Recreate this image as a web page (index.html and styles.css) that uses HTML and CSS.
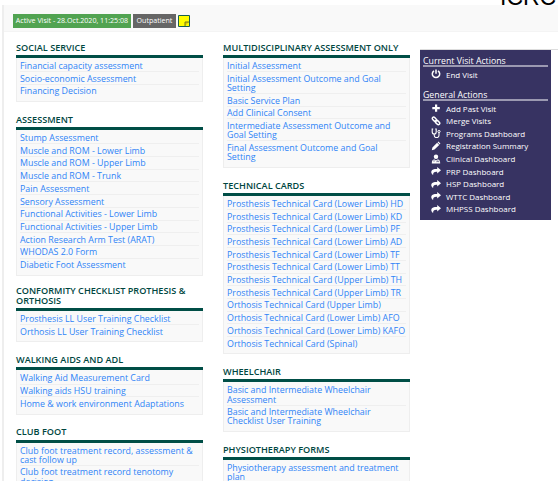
FILE: index.html
```html
<!DOCTYPE html>
<html lang="en">
<head>
<meta charset="utf-8">
<title>Patient visit</title>
<link rel="stylesheet" href="styles.css">
</head>
<body>
<header class="brand"><span>ICRC</span></header>
<div class="page">
  <div class="visit-bar">
    <span class="tag tag-active">Active Visit - 28.Oct.2020, 11:25:08</span>
    <span class="tag tag-type">Outpatient</span>
    <svg class="note" viewBox="0 0 12 12"><path d="M.5.5h11v11H.5z" fill="#ff0" stroke="#17604f"/><path d="M7 11V7h4" fill="#d8d000" stroke="#777a20"/></svg>
  </div>
  <main class="content">
    <div class="column">
      <section><h3>SOCIAL SERVICE</h3><ul>
        <li>Financial capacity assessment</li><li>Socio-economic Assessment</li><li>Financing Decision</li></ul></section>
      <section><h3>ASSESSMENT</h3><ul>
        <li>Stump Assessment</li><li>Muscle and ROM - Lower Limb</li><li>Muscle and ROM - Upper Limb</li><li>Muscle and ROM - Trunk</li><li>Pain Assessment</li><li>Sensory Assessment</li><li>Functional Activities - Lower Limb</li><li>Functional Activities - Upper Limb</li><li>Action Research Arm Test (ARAT)</li><li>WHODAS 2.0 Form</li><li>Diabetic Foot Assessment</li></ul></section>
      <section><h3 class="two-line">CONFORMITY CHECKLIST PROTHESIS &amp;<br>ORTHOSIS</h3><ul>
        <li>Prosthesis LL User Training Checklist</li><li>Orthosis LL User Training Checklist</li></ul></section>
      <section><h3>WALKING AIDS AND ADL</h3><ul>
        <li>Walking Aid Measurement Card</li><li>Walking aids HSU training</li><li>Home &amp; work environment Adaptations</li></ul></section>
      <section><h3>CLUB FOOT</h3><ul>
        <li>Club foot treatment record, assessment &amp;<br>cast follow up</li><li>Club foot treatment record tenotomy<br>decision</li></ul></section>
    </div>
    <div class="column">
      <section><h3>MULTIDISCIPLINARY ASSESSMENT ONLY</h3><ul>
        <li>Initial Assessment</li><li>Initial Assessment Outcome and Goal<br>Setting</li><li>Basic Service Plan</li><li>Add Clinical Consent</li><li>Intermediate Assessment Outcome and<br>Goal Setting</li><li>Final Assessment Outcome and Goal<br>Setting</li></ul></section>
      <section><h3>TECHNICAL CARDS</h3><ul>
        <li>Prosthesis Technical Card (Lower Limb) HD</li><li>Prosthesis Technical Card (Lower Limb) KD</li><li>Prosthesis Technical Card (Lower Limb) PF</li><li>Prosthesis Technical Card (Lower Limb) AD</li><li>Prosthesis Technical Card (Lower Limb) TF</li><li>Prosthesis Technical Card (Lower Limb) TT</li><li>Prosthesis Technical Card (Upper Limb) TH</li><li>Prosthesis Technical Card (Upper Limb) TR</li><li>Orthosis Technical Card (Upper Limb)</li><li>Orthosis Technical Card (Lower Limb) AFO</li><li>Orthosis Technical Card (Lower Limb) KAFO</li><li>Orthosis Technical Card (Spinal)</li></ul></section>
      <section><h3>WHEELCHAIR</h3><ul>
        <li>Basic and Intermediate Wheelchair<br>Assessment</li><li>Basic and Intermediate Wheelchair<br>Checklist User Training</li></ul></section>
      <section><h3>PHYSIOTHERAPY FORMS</h3><ul>
        <li>Physiotherapy assessment and treatment<br>plan</li></ul></section>
    </div>
    <aside class="side">
      <nav class="actions">
        <h4>Current Visit Actions</h4>
        <ul>
          <li><svg viewBox="0 0 10 10"><path d="M3 1.8a3.7 3.7 0 1 0 4 0M5 .5v4.2" fill="none" stroke="#fff" stroke-width="1.5"/></svg>End Visit</li>
        </ul>
        <h4>General Actions</h4>
        <ul>
          <li><svg viewBox="0 0 10 10"><path d="M4 1.500h2.200V4h2.600v2.200H6.200v2.600H4V6.200H1.300V4H4z" fill="#fff"/></svg>Add Past Visit</li>
          <li><svg viewBox="0 0 10 10"><g fill="none" stroke="#fff" stroke-width="1.500"><rect x="1" y="1.800" width="4.800" height="2.800" rx="1.400" transform="rotate(45 3.400 3.200)"/><rect x="4.200" y="5.200" width="4.800" height="2.800" rx="1.400" transform="rotate(45 6.600 6.600)"/></g></svg>Merge Visits</li>
          <li><svg viewBox="0 0 10 10"><path d="M2.200 1H1.200v3a2 2 0 0 0 4 0V1h-1M3.200 6v1.200a2.400 2.400 0 0 0 4.800 0V4.500" fill="none" stroke="#fff" stroke-width="1.100"/><circle cx="8" cy="3.500" r="1.100" fill="none" stroke="#fff"/></svg>Programs Dashboard</li>
          <li><svg viewBox="0 0 10 10"><path d="M.8 9.200l.6-2.700 4.700-4.700 2.100 2.100-4.700 4.700zM6.600 1.300l.8-.7 2 2-.7.800z" fill="#fff"/></svg>Registration Summary</li>
          <li><svg viewBox="0 0 10 10"><circle cx="5" cy="2.700" r="2.200" fill="#fff"/><path d="M.8 9.500C.8 7 1.600 5.500 3.200 5.200L5 6.500l1.800-1.300C8.400 5.500 9.200 7 9.200 9.500z" fill="#fff"/><path d="M3 5.500v2.300M6.800 5.500v1.200M5.800 8.200v-.8h2v.8" fill="none" stroke="#373362" stroke-width=".6"/></svg>Clinical Dashboard</li>
          <li><svg viewBox="0 0 10 10"><path id="share" d="M6.200 1L10 4.300 6.200 7.600V5.700C3.400 5.500 2 6.200 2.100 9 .6 8 .1 6.800.3 5.500.7 3.300 2.800 2.900 6.200 2.900z" fill="#fff"/></svg>PRP Dashboard</li>
          <li><svg viewBox="0 0 10 10"><use href="#share"/></svg>HSP Dashboard</li>
          <li><svg viewBox="0 0 10 10"><use href="#share"/></svg>WTTC Dashboard</li>
          <li><svg viewBox="0 0 10 10"><use href="#share"/></svg>MHPSS Dashboard</li>
        </ul>
      </nav>
    </aside>
  </main>
</div>
</body>
</html>
```
FILE: styles.css
```css
* { box-sizing: border-box; }
body {
  margin: 0;
  width: 558px;
  height: 487px;
  overflow: hidden;
  background: #fff;
  font-family: "Open Sans", sans-serif;
  font-size: 8.86px;
  line-height: 9.2px;
}
h3, h4, ul { margin: 0; padding: 0; }
ul { list-style: none; }
.brand {
  height: 5px;
  padding-left: 500px;
  overflow: hidden;
  font: 23px/23px "Liberation Sans", sans-serif;
  color: #000;
}
.brand span { display: block; margin-top: -14px; white-space: nowrap; }
.page {
  height: 476px;
  margin-left: 2px;
  overflow: hidden;
  border-left: 2px solid #eee;
}
.visit-bar {
  display: flex;
  align-items: center;
  gap: 2px;
  height: 27px;
  padding: 6px 0 0 9px;
  background: #f9f9f9;
  border-bottom: 1px solid #f4f4f4;
}
.tag {
  height: 14px;
  color: #fff;
  font-size: 7.08px;
  line-height: 13px;
  text-align: center;
  white-space: nowrap;
}
.tag-active { width: 118px; background: #51a351; }
.tag-type { width: 43px; background: #666; }
.note { width: 12px; height: 12px; }
.content { display: flex; padding-left: 12px; }
.column { width: 187px; margin: -2px 20px 0 0; flex: none; }
.column + .column { margin-right: 10px; }
h3 {
  display: flex;
  align-items: flex-end;
  height: 28px;
  padding-bottom: 2.4px;
  border-bottom: 3px solid #004e46;
  color: #00463f;
  font-size: 9.15px;
  font-weight: 600;
  line-height: 10px;
  white-space: nowrap;
}
.two-line { display: block; height: 35px; padding-top: 9.5px; }
.column ul {
  padding: 1.4px 3px 3.7px;
  background: #f9f9f9;
  border: solid #eee;
  border-width: 0 1px 1px;
}
.column li {
  padding-top: 2.5px;
  border-bottom: 1px solid #efefef;
  color: #2f84f7;
  white-space: nowrap;
}
.column li:last-child { border-bottom-color: transparent; }
.side { flex: 1; margin-top: 17px; border-top: 1px solid #ddd; }
.actions {
  width: 131px;
  height: 170px;
  padding: 6px 3px 0;
  background: #373362;
  color: #fff;
  font-size: 7.98px;
}
.actions h4 {
  height: 11px;
  border-bottom: 2px solid #9b99b1;
  font-size: 8.75px;
  font-weight: 400;
  line-height: 10px;
}
.actions ul { padding: 1px 0 9.4px 8px; }
.actions li {
  display: flex;
  align-items: center;
  gap: 5px;
  height: 12.6px;
  white-space: nowrap;
}
.actions svg { width: 10px; height: 10px; }
```
